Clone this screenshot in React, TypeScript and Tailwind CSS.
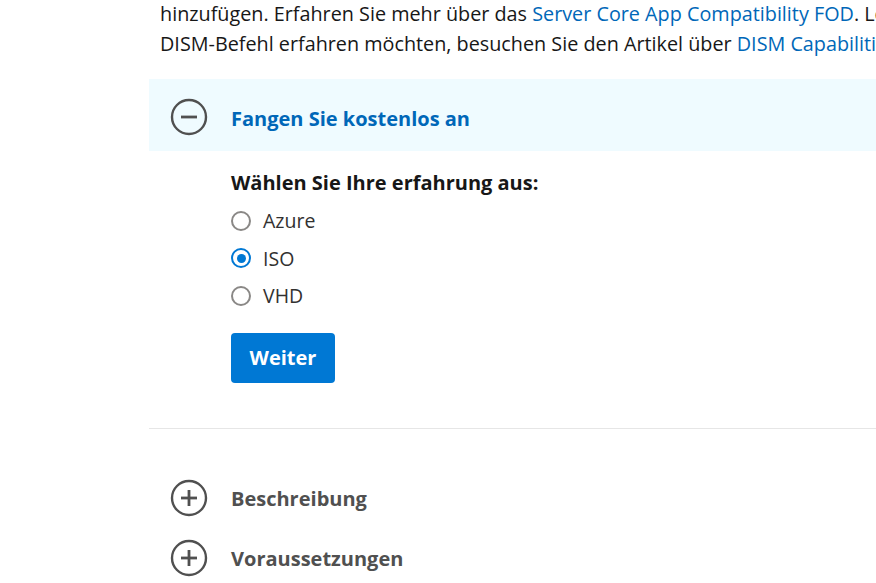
import React from 'react';

type SectionProps = {
  title: string;
  open?: boolean;
};

function CircleIcon({ open }: { open?: boolean }) {
  return (
    <svg width="38" height="38" viewBox="0 0 38 38" className="shrink-0">
      <circle cx="19" cy="19" r="17" fill="none" stroke="#505050" strokeWidth="2.4" />
      <line x1="11" y1="19" x2="27" y2="19" stroke="#505050" strokeWidth="2.8" />
      {!open && <line x1="19" y1="11" x2="19" y2="27" stroke="#505050" strokeWidth="2.8" />}
    </svg>
  );
}

function SectionHeader({ title, open }: SectionProps) {
  return (
    <div className={`flex items-center gap-[23px] pl-[21px] ${open ? 'h-[72px] pt-[4px] bg-[#effbff]' : 'h-[60px]'}`}>
      <CircleIcon open={open} />
      <span className={`text-[20px] font-bold pt-[3px] ${open ? 'text-[#0067b8]' : 'text-[#505050]'}`}>{title}</span>
    </div>
  );
}

function Radio({ label, checked }: { label: string; checked?: boolean }) {
  return (
    <label className="flex items-center gap-[12px] h-[37.5px]">
      {checked ? (
        <span className="w-[20px] h-[20px] rounded-full border-[2.5px] border-[#0078d4] flex items-center justify-center">
          <span className="w-[9px] h-[9px] rounded-full bg-[#0078d4]" />
        </span>
      ) : (
        <span className="w-[20px] h-[20px] rounded-full border-[2.5px] border-[#8a8886]" />
      )}
      <span className="text-[19.5px] text-[#323130]">{label}</span>
    </label>
  );
}

export default function App() {
  return (
    <div className="w-[876px] h-[583px] overflow-hidden bg-white font-['Segoe_UI','Open_Sans',sans-serif] text-[#171717]">
      <div className="pl-[160px] -mt-[1px] text-[19.8px] leading-[30px] whitespace-nowrap">
        <p>
          hinzufügen. Erfahren Sie mehr über das <a className="text-[#0067b8]">Server Core App Compatibility FOD</a>. Lernen Sie mehr über den
        </p>
        <p>
          DISM-Befehl erfahren möchten, besuchen Sie den Artikel über <a className="text-[#0067b8]">DISM Capabilities</a>.
        </p>
      </div>

      <div className="ml-[149px] mt-[20px]">
        <SectionHeader title="Fangen Sie kostenlos an" open />
        <div className="pl-[82px] pt-[18px] pb-[45px] border-b border-[#e6e6e6]">
          <p className="text-[20px] font-bold text-[#171717] leading-[28px]">Wählen Sie Ihre erfahrung aus:</p>
          <div className="pt-[5px]">
            <Radio label="Azure" />
            <Radio label="ISO" checked />
            <Radio label="VHD" />
          </div>
          <button className="mt-[18px] h-[50px] w-[104px] rounded-[4px] bg-[#0078d4] text-white text-[20px] font-bold">
            Weiter
          </button>
        </div>

        <div className="pt-[39px]">
          <SectionHeader title="Beschreibung" />
          <SectionHeader title="Voraussetzungen" />
        </div>
      </div>
    </div>
  );
}
